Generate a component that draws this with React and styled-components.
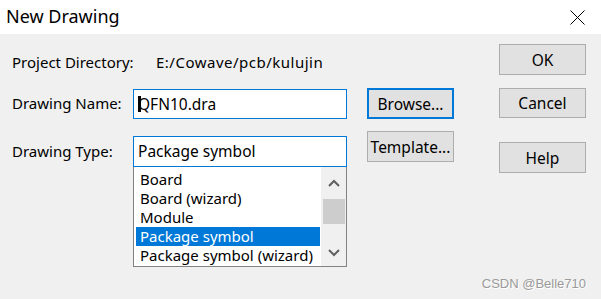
import React from 'react'
import styled, { createGlobalStyle } from 'styled-components'

// ---------------------------------------Styled----------------------------------------

const Global = createGlobalStyle`
    html, body { margin:0; padding:0; background:#f0f0f0; }
    body { font-family:"Noto Sans", "Open Sans", sans-serif; }
`
const Dialog = styled.div`
    width:601px;
    height:299px;
    display:flex;
    flex-direction:column;
    background:#f0f0f0;
    position:relative;
    overflow:hidden;
`
const TitleBar = styled.div`
    height:34px;
    background:#fff;
    display:flex;
    align-items:center;
    justify-content:space-between;
    padding:0 16px 0 6px;
    flex-shrink:0;
`
const Title = styled.div`
    font-size:18px;
    color:#000;
    margin-top:-3px;
`
const Body = styled.div`
    flex:1;
    display:flex;
    padding-left:12px;
    color:#000;
    font-size:15px;
`
const Form = styled.div`
    width:442px;
    display:flex;
    flex-direction:column;
`
const Row = styled.div`
    display:flex;
    align-items:flex-start;
    margin-top:${p => p.$top}px;
    height:${p => p.$h}px;
`
const Label = styled.div`
    width:${p => p.$w}px;
    flex-shrink:0;
    line-height:20px;
    margin-top:${p => p.$top || 0}px;
`
const Value = styled.div`
    line-height:20px;
    letter-spacing:0.5px;
`
const Field = styled.div`
    position:relative;
    width:214px;
    height:${p => p.$h}px;
    box-sizing:border-box;
    margin-top:${p => p.$top || 0}px;
    background:#fff;
    border:1px solid #0078d7;
    padding-left:4px;
    line-height:${p => p.$h - 2}px;
    font-size:15.5px;
    flex-shrink:0;
`
const Button = styled.div`
    width:87px;
    height:${p => p.$h || 31}px;
    box-sizing:border-box;
    background:#e1e1e1;
    border:${p => p.$focus ? '2px solid #0078d7' : '1px solid #adadad'};
    display:flex;
    align-items:center;
    justify-content:center;
    font-size:15.5px;
    margin-top:${p => p.$top || 0}px;
    margin-left:${p => p.$left || 0}px;
    flex-shrink:0;
`
const Cursor = styled.div`
    position:absolute;
    left:3px;
    top:6px;
    width:3px;
    height:16px;
    background:#000;
    border-left:1px solid #fff;
`
const ListBox = styled.div`
    margin-left:121px;
    width:214px;
    height:100px;
    box-sizing:border-box;
    border:1px solid #828282;
    border-top:none;
    background:#fff;
    display:flex;
`
const Items = styled.div`
    flex:1;
    padding:3px 0 0 2px;
    overflow:hidden;
`
const Item = styled.div`
    height:19px;
    line-height:19px;
    padding-left:4px;
    font-size:15px;
    white-space:nowrap;
    overflow:hidden;
    background:${p => p.$sel ? '#0078d7' : 'transparent'};
    color:${p => p.$sel ? '#fff' : '#000'};
    margin-right:1px;
`
const Scroll = styled.div`
    width:25px;
    background:#f0f0f0;
    display:flex;
    flex-direction:column;
    align-items:center;
`
const Arrow = styled.div`
    height:24px;
    display:flex;
    align-items:center;
    justify-content:center;
    margin-top:${p => p.$top || 0}px;
`
const Thumb = styled.div`
    width:22px;
    height:25px;
    background:#cdcdcd;
    margin-top:4px;
`
const Side = styled.div`
    display:flex;
    flex-direction:column;
    margin-left:45px;
`
const Watermark = styled.div`
    position:absolute;
    right:15px;
    bottom:8px;
    font-family:"Liberation Sans", Arial, sans-serif;
    font-size:13px;
    color:#9a9a9a;
    text-shadow:1px 1px 0 #fff;
`

// ---------------------------------------Structure----------------------------------------

const Chevron = ({ up }) => (
    <svg width="12" height="8" viewBox="0 0 12 8">
        <path d={up ? 'M1 7 L6 2 L11 7' : 'M1 1 L6 6 L11 1'} fill="none" stroke="#606060" strokeWidth="2" />
    </svg>
)

const types = ['Board', 'Board (wizard)', 'Module', 'Package symbol', 'Package symbol (wizard)']

export default function App() {
    return (
        <Dialog>
            <Global />
            <TitleBar>
                <Title>New Drawing</Title>
                <svg width="15" height="15" viewBox="0 0 15 15">
                    <path d="M0.5 0.5 L14.5 14.5 M14.5 0.5 L0.5 14.5" stroke="#000" strokeWidth="1" />
                </svg>
            </TitleBar>
            <Body>
                <Form>
                    <Row $top={18} $h={20}>
                        <Label $w={144}>Project Directory:</Label>
                        <Value>E:/Cowave/pcb/kulujin</Value>
                    </Row>
                    <Row $top={16} $h={31}>
                        <Label $w={121} $top={5}>Drawing Name:</Label>
                        <Field $h={30} $top={1}>
                            <Cursor />
                            QFN10.dra
                        </Field>
                        <Button $focus $left={20}>Browse...</Button>
                    </Row>
                    <Row $top={12} $h={36}>
                        <Label $w={121} $top={10}>Drawing Type:</Label>
                        <Field $h={31} $top={5}>Package symbol</Field>
                        <Button $left={20}>Template...</Button>
                    </Row>
                    <ListBox>
                        <Items>
                            {types.map(t => (
                                <Item key={t} $sel={t === 'Package symbol'}>{t}</Item>
                            ))}
                        </Items>
                        <Scroll>
                            <Arrow $top={4}><Chevron up /></Arrow>
                            <Thumb />
                            <Arrow $top={17}><Chevron /></Arrow>
                        </Scroll>
                    </ListBox>
                </Form>
                <Side>
                    <Button $top={10}>OK</Button>
                    <Button $top={13} $h={30}>Cancel</Button>
                    <Button $top={24}>Help</Button>
                </Side>
            </Body>
            <Watermark>CSDN @Belle710</Watermark>
        </Dialog>
    )
}
